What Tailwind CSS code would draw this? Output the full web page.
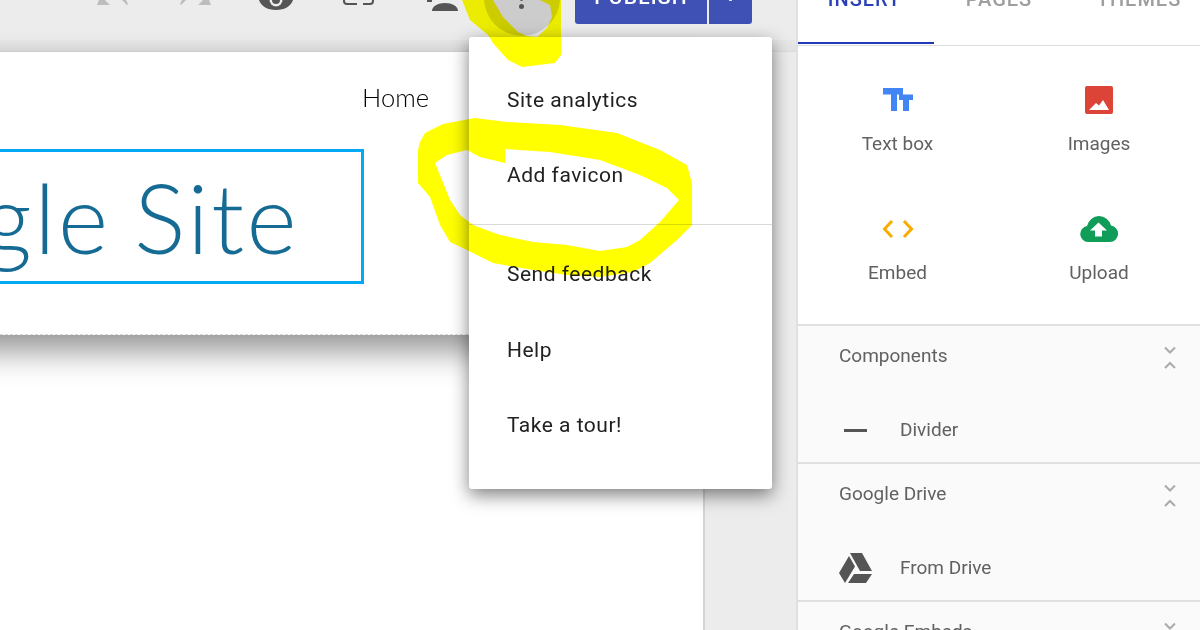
<!DOCTYPE html>
<html lang="en">
<head>
    <meta charset="UTF-8">
    <title>Google Site</title>
    <script src="https://cdn.jsdelivr.net/npm/@tailwindcss/browser@4"></script>
</head>
<body class="bg-[#ececec]">
<div class="relative w-[1200px] h-[630px] overflow-hidden flex font-['Roboto',sans-serif]">
    <!-- Editor column -->
    <div class="w-[796px] h-full flex flex-col shrink-0">
        <!-- Toolbar -->
        <div class="relative h-[40px] shrink-0 flex items-start">
            <svg class="ml-[97px] w-[32px] h-[6px]" viewBox="0 0 32 6" fill="#bdbdbd"><path d="M2 0h6l5 5H0zM25 0h4l2 4-1 1z"/></svg>
            <svg class="ml-[49px] w-[33px] h-[6px]" viewBox="0 0 33 6" fill="#bdbdbd"><path d="M31 0h-6l-5 5h13zM8 0H4L2 4l1 1z"/></svg>
            <svg class="ml-[47px] w-[36px] h-[11px]" viewBox="0 0 36 11" fill="#555"><path d="M1 0h34c-2 6-8 10-17 10S3 6 1 0z"/><circle cx="18" cy="0" r="6.500" fill="#ececec"/><circle cx="18" cy="0" r="4" fill="#555"/></svg>
            <svg class="ml-[49px] w-[32px] h-[6px]" viewBox="0 0 32 6" fill="none" stroke="#555" stroke-width="2"><path d="M1 0v1c0 2 1 3 3 3h10M20 4h7c2 0 3-1 3-3V0"/></svg>
            <svg class="ml-[52px] w-[31px] h-[12px]" viewBox="0 0 31 12" fill="#555"><path d="M5 11c0-5 6-8 13-8s13 3 13 8z"/><path d="M0 2h5V0H0z"/></svg>
            <div class="ml-[117px] flex items-start">
                <div class="w-[132px] h-[35px] -mt-[11px] bg-[#3f51b5] rounded-bl-[3px] text-white font-medium text-[21px] leading-[16px] tracking-[1.2px] flex justify-center">PUBLISH</div>
                <div class="w-[43px] h-[24px] ml-[2px] bg-[#3f51b5] rounded-br-[3px] flex justify-center"><div class="w-[3px] h-[1px] bg-white/80"></div></div>
            </div>
        </div>
        <div class="h-[12px] shrink-0 bg-gradient-to-b from-[#e8e8e8] to-[#e2e2e2] border-b border-[#dcdcdc]"></div>
        <!-- Site page -->
        <div class="w-[705px] flex-1 bg-white border-r-2 border-[#d4d4d4] flex flex-col">
            <div class="relative z-10 -ml-[40px] pl-[40px] h-[283px] shrink-0 bg-white border-b border-dashed border-[#d8d8d8] shadow-[0_16px_30px_rgba(0,0,0,0.42)]">
                <div class="h-[97px] flex justify-end pr-[274px] pt-[28px] font-['Lato',sans-serif] font-light text-[25.500px] leading-[34px] text-black">Home</div>
                <div class="w-[364px] h-[135px] border-[3px] border-l-0 border-[#03a9f4] flex justify-end items-center pr-[62px] whitespace-nowrap font-['Lato',sans-serif] font-light text-[96px] tracking-[2.500px] [word-spacing:-5px] leading-none text-[#156b94]">Google Site</div>
            </div>
        </div>
    </div>

    <!-- Right panel -->
    <aside class="w-[404px] shrink-0 border-l-2 border-[#e0e0e0] bg-white flex flex-col">
        <div class="h-[46px] shrink-0 border-b border-[#dddddd] flex text-[20px] leading-[16px] font-medium text-[#9e9e9e] tracking-[1px]">
            <div class="w-[136px] h-[53px] -mt-[9px] pr-[3px] border-b-2 border-[#2039b5] text-[#2a3fb5] flex justify-center">INSERT</div>
            <div class="w-[130px] -mt-[9px] flex justify-center">PAGES</div>
            <div class="w-[136px] -mt-[9px] pl-[14px] flex justify-center">THEMES</div>
        </div>
        <div class="h-[278px] shrink-0 grid grid-cols-2 grid-rows-[139px_139px] text-[#616161] text-[19px] leading-[24px] text-center">
            <div class="pt-[42px] pr-[2px]">
                <svg class="mx-auto w-[30px] h-[23px]" viewBox="0 0 30 23" fill="#4285f4"><path d="M0 0h20v6.500h-6V23H8V6.500H0zM16 6.500h14V12h-4v11h-6V12h-4z"/></svg>
                <div class="mt-[21px]">Text box</div>
            </div>
            <div class="pt-[40px] pr-[1px]">
                <svg class="mx-auto w-[28px] h-[28px]" viewBox="0 0 28 28"><rect width="28" height="28" rx="2" fill="#db4437"/><path d="M4 24l7-7 3 2.500 4-5.500 6 10z" fill="#fff"/></svg>
                <div class="mt-[18px]">Images</div>
            </div>
            <div class="pt-[34px] pr-[2px]">
                <svg class="mx-auto w-[32px] h-[20px]" viewBox="0 0 32 20" fill="none" stroke="#f9ab00" stroke-width="3"><path d="M10 2L2.500 10 10 18M22 2l7.500 8L22 18"/></svg>
                <div class="mt-[22px]">Embed</div>
            </div>
            <div class="pt-[31px] pr-[1px]">
                <svg class="mx-auto w-[38px] h-[26px]" viewBox="0 0 38 26"><path d="M8 26a8 8 0 0 1-1-15.900A13 13 0 0 1 19 0a13 13 0 0 1 12 9.500A8.300 8.300 0 0 1 30 26z" fill="#0f9d58"/><path d="M18.500 6.500l8.500 8h-5v6h-7v-6h-5z" fill="#fff"/></svg>
                <div class="mt-[19px]">Upload</div>
            </div>
        </div>
        <div class="flex-1 bg-[#fafafa] text-[#616161] text-[19px] leading-[24px]">
            <div class="h-[138px] border-t-2 border-[#e0e0e0] pl-[41px] pr-[20px]">
                <div class="flex justify-between pt-[18px]">
                    <span>Components</span>
                    <svg class="w-[12px] h-[24px] mt-[1px] mr-[4px]" viewBox="0 0 12 24" fill="none" stroke="#aaa" stroke-width="2"><path d="M1 2.500l5 5 5-5M1 23l5-5 5 5"/></svg>
                </div>
                <div class="flex items-center mt-[49px]">
                    <div class="w-[23px] h-[3px] ml-[5px] bg-[#555]"></div>
                    <span class="ml-[33px]">Divider</span>
                </div>
            </div>
            <div class="h-[138px] border-t-2 border-[#e0e0e0] pl-[41px] pr-[20px]">
                <div class="flex justify-between pt-[18px]">
                    <span>Google Drive</span>
                    <svg class="w-[12px] h-[24px] mt-[1px] mr-[4px]" viewBox="0 0 12 24" fill="none" stroke="#aaa" stroke-width="2"><path d="M1 2.500l5 5 5-5M1 23l5-5 5 5"/></svg>
                </div>
                <div class="flex items-center mt-[46px]">
                    <svg class="w-[33px] h-[30px]" viewBox="0 0 33 30" fill="#555"><path d="M11 0h12l10 18H21zM10 3l6 10.500L6 30 0 20zM15 21h18l-6 9H9z"/></svg>
                    <span class="ml-[28px]">From Drive</span>
                </div>
            </div>
            <div class="border-t-2 border-[#e0e0e0] pl-[41px] pr-[20px]">
                <div class="flex justify-between pt-[18px]">
                    <span>Google Embeds</span>
                    <svg class="w-[12px] h-[24px] mt-[1px] mr-[4px]" viewBox="0 0 12 24" fill="none" stroke="#aaa" stroke-width="2"><path d="M1 2.500l5 5 5-5M1 23l5-5 5 5"/></svg>
                </div>
            </div>
        </div>
    </aside>

    <!-- Overflow button behind the scribble -->
    <div class="absolute left-[484px] -top-[40px] w-[76px] h-[76px] rounded-full bg-[#cccccc]">
        <div class="absolute left-[35px] top-[44px] w-[5px] h-[5px] rounded-full bg-[#555]"></div>
        <div class="absolute left-[36px] top-[38px] w-[3px] h-[3px] rounded-full bg-[#555]"></div>
    </div>

    <!-- Overflow menu -->
    <div class="absolute z-20 left-[469px] top-[37px] w-[303px] h-[452px] bg-white rounded-[3px] shadow-[0_6px_18px_rgba(0,0,0,0.5)] text-[#212121] text-[21px] leading-[28px] tracking-[0.5px] pl-[38px] pt-[49px]">
        <div class="h-[75px]">Site analytics</div>
        <div class="h-[63px]">Add favicon</div>
        <div class="h-px bg-[#d9d9d9] -ml-[38px]"></div>
        <div class="h-[75px] pt-[35px]">Send feedback</div>
        <div class="h-[75px] pt-[36px]">Help</div>
        <div class="pt-[36px]">Take a tour!</div>
    </div>

    <!-- Yellow marker scribbles -->
    <svg class="absolute z-30 left-0 top-0 w-[1200px] h-[630px] mix-blend-multiply pointer-events-none" viewBox="0 0 1200 630" fill="#ffff00" fill-rule="evenodd">
        <path d="M462 0L470 20 488 35 493 43 508 60 522 67 555 63 561 55V0H540L550 5 552 17 547 28 537 37 527 36 518 32 503 17 493 0z"/>
        <path d="M418 150L420 142 425 133 443 124 475 118 507 122 560 125 617 133 660 150 687 165 692 183 692 225 677 240 650 263 633 272 600 277 567 275 533 270 493 263 467 250 450 242 440 225 430 197 418 183zM435 163L447 155 467 150 480 157 505 163 505 149 550 152 600 160 640 175 667 188 679 200 660 222 640 240 627 247 600 251 567 245 533 242 500 235 473 225 460 215 450 200 442 180z"/>
    </svg>
</div>
</body>
</html>
